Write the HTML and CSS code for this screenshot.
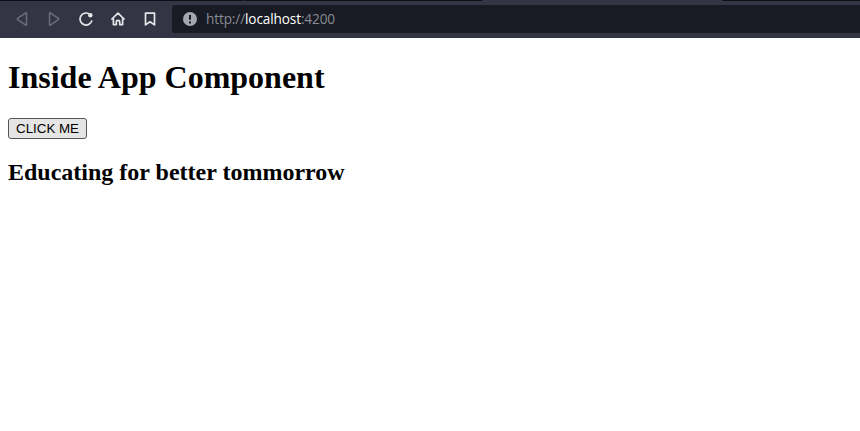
FILE: index.html
```html
<!DOCTYPE html>
<html lang="en">
<head>
<meta charset="utf-8">
<title>App</title>
<link rel="stylesheet" href="styles.css">
</head>
<body>
<header class="chrome">
  <div class="tabs"><span class="tab first"></span><span class="tab second"></span><span class="active"></span><span class="tab rest"></span></div>
  <div class="toolbar">
    <nav class="controls">
      <svg class="icon muted" viewBox="0 0 16 16"><path d="M12.500 2.300v11.400q0 .8-.7.400L3.600 8.600q-.7-.6 0-1.200l8.200-5.500q.7-.4.7.4z"/></svg>
      <svg class="icon muted" viewBox="0 0 16 16"><path d="M3.500 2.300v11.400q0 .8.7.4l8.200-5.500q.7-.6 0-1.200L4.200 1.900q-.7-.4-.7.4z"/></svg>
      <svg class="icon" viewBox="0 0 16 16"><path class="bold" d="M11.200 2.900A6 6 0 1 0 13.900 9.400"/><circle class="dot" cx="12.300" cy="4.300" r="2.200"/></svg>
      <svg class="icon" viewBox="0 0 16 16"><path class="bold" d="M1.400 8.500 8 2.100l6.600 6.400M3.400 7.500v6.100h2.900v-2.700q0-1.600 1.700-1.600t1.700 1.600v2.700h2.900V7.500"/></svg>
      <svg class="icon" viewBox="0 0 16 16"><path class="bold" d="M3.500 2.100h9v11.800L8 10.800l-4.500 3.100z"/></svg>
    </nav>
    <div class="address">
      <svg class="info" viewBox="0 0 14 14"><circle cx="7" cy="7" r="7"/><path d="M7 2.900v4.900M7 9.400v2"/></svg>
      <span class="url">http://<span class="host">localhost</span>:4200</span>
    </div>
  </div>
</header>
<main class="page">
  <h1>Inside App Component</h1>
  <button class="action">CLICK ME</button>
  <h2>Educating for better tommorrow</h2>
</main>
</body>
</html>
```
FILE: styles.css
```css
body { margin: 0; background: #fff; color: #000; font-family: "Liberation Serif", serif; }
.chrome { height: 38px; background: #333544; overflow: hidden; }
.tabs { display: flex; height: 1px; }
.tab { background: #0f0e17; }
.first { width: 243px; margin-right: 1px; }
.second { width: 238px; }
.active { width: 240px; }
.rest { flex: 1; }
.toolbar { display: flex; height: 37px; box-sizing: border-box; padding: 4px 0 5px 14px; }
.controls { display: flex; align-items: center; gap: 16px; width: 158px; }
.icon { width: 16px; height: 16px; flex: none; fill: none; stroke: #e6e6e9; stroke-width: 1.5; stroke-linejoin: round; }
.muted { stroke: #6c6e7b; }
.bold { stroke-width: 1.7; }
.dot { fill: #e6e6e9; stroke: none; }
.address { flex: 1; display: flex; align-items: center; background: #181b23; border-radius: 3px 0 0 3px; padding-left: 11px; }
.info { width: 14px; height: 14px; fill: #a4a7b0; }
.info path { stroke: #181b23; stroke-width: 2; }
.url { margin-left: 9px; font: 13.6px/20px "Open Sans", sans-serif; letter-spacing: -0.12px; color: #878b92; }
.host { color: #fff; }
.page { padding: 0 8px; }
h1 { margin: 0; padding-top: 21px; font-size: 32px; line-height: 37px; }
.action { display: block; width: 79px; height: 21px; margin: 22px 0 0; padding: 0; border: 1px solid #555; border-radius: 3px; background: #e5e5e5; color: #000; font: 13.333px/17px "Liberation Sans", sans-serif; white-space: nowrap; }
h2 { margin: 19px 0 0; font-size: 24px; line-height: 28px; }
```
